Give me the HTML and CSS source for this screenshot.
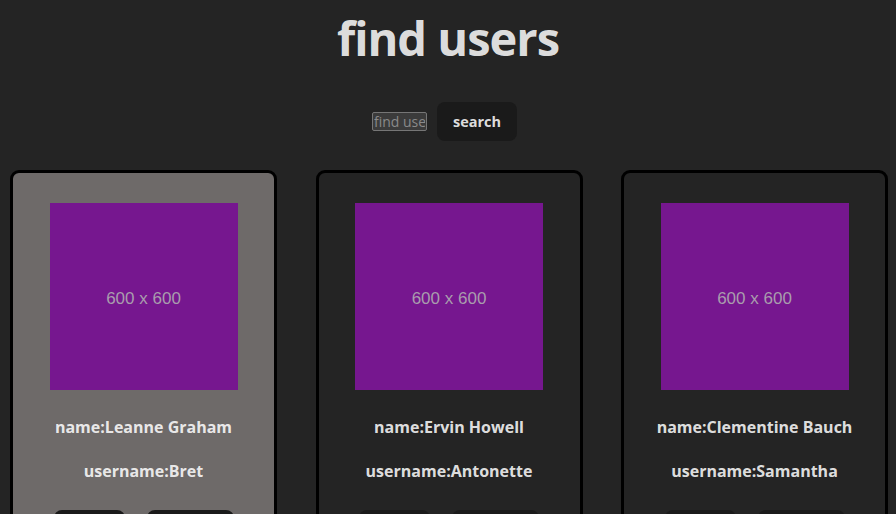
FILE: index.html
```html
<!DOCTYPE html>
<html lang="en">
<head>
<meta charset="UTF-8">
<title>find users</title>
<link rel="stylesheet" href="styles.css">
</head>
<body>
<div class="app">
  <h1 class="title">find users</h1>
  <form class="search">
    <input class="search-input" type="text" placeholder="find users">
    <button class="btn search-btn" type="button">search</button>
  </form>
  <div class="cards">
    <div class="card card-hover">
      <div class="avatar">600 x 600</div>
      <p class="line">name:Leanne Graham</p>
      <p class="line">username:Bret</p>
      <div class="actions">
        <button class="btn act act-a" type="button">view</button>
        <button class="btn act act-b" type="button">follow</button>
      </div>
    </div>
    <div class="card">
      <div class="avatar">600 x 600</div>
      <p class="line">name:Ervin Howell</p>
      <p class="line">username:Antonette</p>
      <div class="actions">
        <button class="btn act act-a" type="button">view</button>
        <button class="btn act act-b" type="button">follow</button>
      </div>
    </div>
    <div class="card">
      <div class="avatar">600 x 600</div>
      <p class="line">name:Clementine Bauch</p>
      <p class="line">username:Samantha</p>
      <div class="actions">
        <button class="btn act act-a" type="button">view</button>
        <button class="btn act act-b" type="button">follow</button>
      </div>
    </div>
  </div>
</div>
</body>
</html>
```

FILE: styles.css
```css
* { box-sizing: border-box; }

html, body {
  margin: 0;
  padding: 0;
  background: #242424;
  color: rgba(255, 255, 255, 0.87);
  font-family: "Open Sans", "Noto Sans", sans-serif;
  overflow: hidden;
}

.app {
  display: flex;
  flex-direction: column;
  align-items: center;
  height: 514px;
}

.title {
  margin: 6px 0 0;
  font-size: 47px;
  font-weight: 700;
  line-height: 64px;
  letter-spacing: -1px;
}

.search {
  display: flex;
  align-items: center;
  gap: 10px;
  margin-top: 32px;
  padding-right: 7px;
}

.search-input {
  width: 55px;
  height: 19px;
  padding: 0 1px;
  font-family: "Open Sans", sans-serif;
  font-size: 14px;
  color: #ddd;
  background: #3b3b3b;
  border: 1px solid #767676;
  border-radius: 2px;
}

.search-input::placeholder { color: #8a8a8a; }

.btn {
  border: 1px solid transparent;
  border-radius: 8px;
  background: #1a1a1a;
  color: rgba(255, 255, 255, 0.87);
  font-family: "Open Sans", sans-serif;
  font-weight: 700;
  font-size: 14px;
  cursor: pointer;
}

.search-btn {
  width: 80px;
  height: 39px;
  padding: 0;
  font-size: 14.5px;
}

.cards {
  align-self: stretch;
  display: grid;
  grid-template-columns: repeat(3, 267px);
  column-gap: 38.5px;
  padding-left: 10px;
  margin-top: 29px;
}

.card {
  display: flex;
  flex-direction: column;
  align-items: center;
  border: 3px solid #000;
  border-radius: 9px;
  background: #242424;
  padding-top: 30px;
  height: 400px;
}

.card-hover { background: #6e6a69; }

.avatar {
  width: 188px;
  height: 187px;
  padding-top: 4px;
  background: #76178f;
  color: #a99dad;
  font-family: "Liberation Sans", Arial, sans-serif;
  font-size: 17px;
  display: flex;
  align-items: center;
  justify-content: center;
}

.line {
  margin: 0;
  font-size: 16px;
  font-weight: 700;
  line-height: 22px;
}

.avatar + .line { margin-top: 26px; }
.line + .line { margin-top: 22px; }

.actions {
  display: flex;
  gap: 22px;
  margin-top: 28px;
}

.act {
  height: 38px;
  padding: 0;
}

.act-a { width: 71px; }
.act-b { width: 87px; }
```
